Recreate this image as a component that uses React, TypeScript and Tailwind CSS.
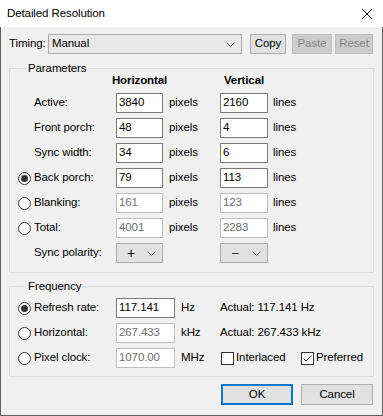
import React from 'react'

const Chevron = () => (
  <svg width="9" height="5" viewBox="0 0 9 5">
    <path d="M0.5 0.5 L4.5 4.5 L8.5 0.5" stroke="#606060" fill="none" strokeWidth="1" />
  </svg>
)

const Radio = ({ checked }: { checked?: boolean }) => (
  <svg width="13" height="13" viewBox="0 0 13 13">
    <circle cx="6.5" cy="6.5" r="6" fill="white" stroke="#333333" />
    {checked && <circle cx="6.5" cy="6.5" r="3.5" fill="#333333" />}
  </svg>
)

const Check = ({ checked }: { checked?: boolean }) => (
  <svg width="13" height="13" viewBox="0 0 13 13">
    <rect x="0.5" y="0.5" width="12" height="12" fill="white" stroke="#333333" />
    {checked && <path d="M2.5 6.5 L5 9 L10.5 3.5" stroke="#333333" fill="none" />}
  </svg>
)

const Field = ({ value, disabled, w }: { value: string; disabled?: boolean; w: string }) => (
  <div
    className={`h-[20px] ${w} flex items-center bg-white pl-[2px] border ${
      disabled ? 'border-[#bfbfbf] text-[#6d6d6d]' : 'border-[#7a7a7a]'
    }`}
  >
    {value}
  </div>
)

interface Row {
  radio?: boolean
  label: string
  h: string
  v: string
  disabled?: boolean
}

const rows: Row[] = [
  { label: 'Active:', h: '3840', v: '2160' },
  { label: 'Front porch:', h: '48', v: '4' },
  { label: 'Sync width:', h: '34', v: '6' },
  { radio: true, label: 'Back porch:', h: '79', v: '113' },
  { radio: false, label: 'Blanking:', h: '161', v: '123', disabled: true },
  { radio: false, label: 'Total:', h: '4001', v: '2283', disabled: true },
]

const App = () => {
  return (
    <div className="w-[383px] h-[416px] flex flex-col bg-white text-[11.5px] tracking-[-0.1px] text-black font-['Liberation_Sans',Arial,sans-serif] select-none">
      {/* Title bar */}
      <div className="h-[27px] flex items-center justify-between pl-[7px] pr-[11px] shrink-0">
        <span className="text-[11.5px]">Detailed Resolution</span>
        <svg width="10" height="10" viewBox="0 0 10 10">
          <path d="M0 0 L10 10 M10 0 L0 10" stroke="#111" strokeWidth="1" />
        </svg>
      </div>

      {/* Body */}
      <div className="flex-1 flex flex-col bg-[#f0f0f0] border-x border-b border-[#5f5f5f] px-[8px] pt-[7px]">
        {/* Timing row */}
        <div className="flex items-center h-[20px]">
          <span className="w-[39px]">Timing:</span>
          <div className="w-[194px] h-[20px] flex items-center justify-between border border-[#acacac] bg-[#e8e8e8] pl-[3px] pr-[6px]">
            <span>Manual</span>
            <Chevron />
          </div>
          <button className="ml-[8px] w-[36px] h-[20px] border border-[#adadad] bg-[#e1e1e1]">Copy</button>
          <button className="ml-[6px] w-[40px] h-[20px] border border-[#bfbfbf] bg-[#cccccc] text-[#838383]">Paste</button>
          <button className="ml-[3px] w-[38px] h-[20px] border border-[#bfbfbf] bg-[#cccccc] text-[#838383]">Reset</button>
        </div>

        {/* Parameters */}
        <fieldset className="mt-[7px] w-[365px] border border-[#dcdcdc] pl-[8px] pb-[9px]">
          <legend className="ml-[8px] px-[2px] leading-[14px]">Parameters</legend>
          <div className="grid grid-cols-[16px_82px_47px_57px_48px_auto] h-[18px]">
            <div />
            <div />
            <div className="flex justify-center whitespace-nowrap font-bold leading-[10px]">Horizontal</div>
            <div />
            <div className="flex justify-center whitespace-nowrap font-bold leading-[10px]">Vertical</div>
          </div>
          <div className="flex flex-col gap-[5px]">
            {rows.map((r) => (
              <div key={r.label} className="grid grid-cols-[16px_82px_47px_57px_48px_auto] h-[20px] items-center">
                <div className="flex items-center">{r.radio !== undefined && <Radio checked={r.radio} />}</div>
                <span>{r.label}</span>
                <Field value={r.h} disabled={r.disabled} w="w-[47px]" />
                <span className="pl-[6px]">pixels</span>
                <Field value={r.v} disabled={r.disabled} w="w-[48px]" />
                <span className="pl-[5px]">lines</span>
              </div>
            ))}
            <div className="grid grid-cols-[16px_82px_47px_57px_48px_auto] h-[20px] items-center">
              <div />
              <span>Sync polarity:</span>
              <div className="w-[47px] h-[20px] flex items-center border border-[#adadad] bg-[#e1e1e1] pl-[10px] pr-[6px] justify-between">
                <span className="text-[14px] leading-none">+</span>
                <Chevron />
              </div>
              <div />
              <div className="w-[48px] h-[20px] flex items-center border border-[#adadad] bg-[#e1e1e1] pl-[11px] pr-[6px] justify-between">
                <span className="leading-none">–</span>
                <Chevron />
              </div>
            </div>
          </div>
        </fieldset>

        {/* Frequency */}
        <fieldset className="mt-[6px] w-[365px] border border-[#dcdcdc] pl-[8px] pt-[5px] pb-[8px]">
          <legend className="ml-[8px] px-[2px] leading-[14px]">Frequency</legend>
          <div className="flex flex-col gap-[5px]">
            <div className="grid grid-cols-[16px_82px_59px_45px_auto] h-[20px] items-center">
              <div className="flex items-center"><Radio checked /></div>
              <span>Refresh rate:</span>
              <Field value="117.141" w="w-[59px]" />
              <span className="pl-[6px]">Hz</span>
              <span>Actual: 117.141 Hz</span>
            </div>
            <div className="grid grid-cols-[16px_82px_59px_45px_auto] h-[20px] items-center">
              <div className="flex items-center"><Radio /></div>
              <span>Horizontal:</span>
              <Field value="267.433" disabled w="w-[59px]" />
              <span className="pl-[6px]">kHz</span>
              <span>Actual: 267.433 kHz</span>
            </div>
            <div className="grid grid-cols-[16px_82px_59px_45px_auto] h-[20px] items-center">
              <div className="flex items-center"><Radio /></div>
              <span>Pixel clock:</span>
              <Field value="1070.00" disabled w="w-[59px]" />
              <span className="pl-[6px]">MHz</span>
              <div className="flex items-center pl-[1px]">
                <Check />
                <span className="ml-[2px] w-[65px]">Interlaced</span>
                <Check checked />
                <span className="ml-[2px]">Preferred</span>
              </div>
            </div>
          </div>
        </fieldset>

        {/* Buttons */}
        <div className="flex justify-end gap-[8px] mt-[7px] pr-[1px]">
          <button className="w-[72px] h-[21px] border-2 border-[#0078d7] bg-[#e1e1e1]">OK</button>
          <button className="w-[72px] h-[21px] border border-[#adadad] bg-[#e1e1e1]">Cancel</button>
        </div>
      </div>
    </div>
  )
}

export default App
